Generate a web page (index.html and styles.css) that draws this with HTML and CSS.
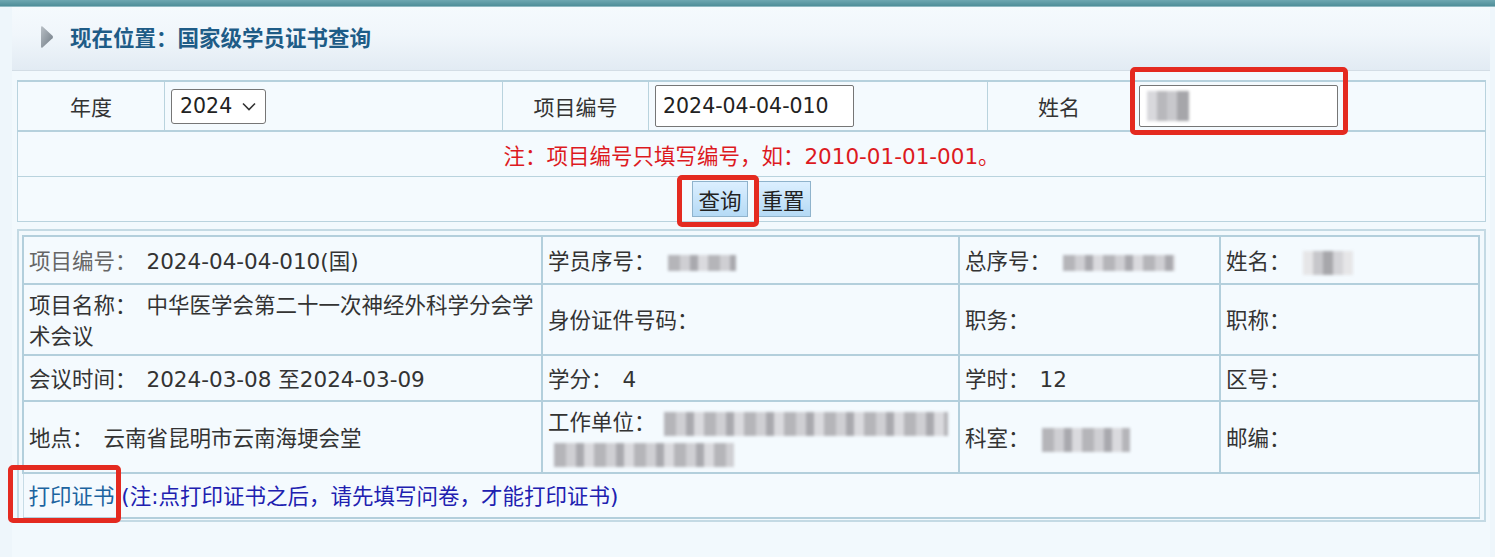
FILE: index.html
```html
<!DOCTYPE html>
<html>
<head>
    <meta charset="utf-8">
    <link rel="stylesheet" href="styles.css">
</head>
<body>
    <div class="topbar"></div>

    <div class="page">
        <!-- 当前位置 -->
        <div class="location">
            <svg class="loc-arrow" width="14" height="24" viewBox="0 0 14 24">
                <defs>
                    <linearGradient id="arr" x1="0" y1="0" x2="1" y2="1">
                        <stop offset="0" stop-color="#b9c0c6"/>
                        <stop offset="1" stop-color="#6f7a84"/>
                    </linearGradient>
                </defs>
                <path d="M2.5 1.5 Q1 0.8 1 2.5 L1 21.5 Q1 23.2 2.5 22.5 L12.5 13.2 Q13.6 12 12.5 10.8 Z" fill="url(#arr)"/>
            </svg>
            <h1 class="loc-title">现在位置：国家级学员证书查询</h1>
        </div>

        <div class="content">
            <!-- 查询条件 -->
            <table class="search">
                <colgroup>
                    <col style="width:147px">
                    <col style="width:338px">
                    <col style="width:146px">
                    <col style="width:339px">
                    <col style="width:143px">
                    <col>
                </colgroup>
                <tr class="row-fields">
                    <td class="label">年度</td>
                    <td>
                        <span class="select-box">
                            <select class="year-select">
                                <option>2024</option>
                            </select>
                            <svg class="select-chevron" width="14" height="9" viewBox="0 0 14 9">
                                <path d="M1 1.5 L7 7.5 L13 1.5" fill="none" stroke="#333" stroke-width="1.6"/>
                            </svg>
                        </span>
                    </td>
                    <td class="label">项目编号</td>
                    <td><input class="text-input code-input" type="text" value="2024-04-04-010"></td>
                    <td class="label">姓名</td>
                    <td>
                        <span class="name-input text-input">
                            <span class="blur blur-input"></span>
                        </span>
                    </td>
                </tr>
                <tr class="row-note">
                    <td colspan="6">注：项目编号只填写编号，如：2010-01-01-001。</td>
                </tr>
                <tr class="row-btns">
                    <td colspan="6">
                        <button class="btn">查询</button><button class="btn">重置</button>
                    </td>
                </tr>
            </table>

            <!-- 查询结果 -->
            <div class="result-wrap">
                <table class="result">
                    <colgroup>
                        <col style="width:519px">
                        <col style="width:417px">
                        <col style="width:261px">
                        <col>
                    </colgroup>
                    <tr class="r1">
                        <td><span class="k light">项目编号：</span><span class="v">2024-04-04-010(国)</span></td>
                        <td><span class="k">学员序号：</span><span class="blur" style="width:68px"></span></td>
                        <td><span class="k">总序号：</span><span class="blur" style="width:112px"></span></td>
                        <td><span class="k">姓名：</span><span class="blur blur-tall" style="width:50px"></span></td>
                    </tr>
                    <tr class="r2">
                        <td><span class="k">项目名称：</span><span class="v">中华医学会第二十一次神经外科学分会学术会议</span></td>
                        <td><span class="k">身份证件号码：</span></td>
                        <td><span class="k">职务：</span></td>
                        <td><span class="k">职称：</span></td>
                    </tr>
                    <tr class="r3">
                        <td><span class="k">会议时间：</span><span class="v">2024-03-08 至2024-03-09</span></td>
                        <td><span class="k">学分：</span><span class="v">4</span></td>
                        <td><span class="k">学时：</span><span class="v">12</span></td>
                        <td><span class="k">区号：</span></td>
                    </tr>
                    <tr class="r4">
                        <td><span class="k">地点：</span><span class="v">云南省昆明市云南海埂会堂</span></td>
                        <td class="work">
                            <div class="work-line1"><span class="k">工作单位：</span><span class="blur blur-big" style="width:284px"></span></div>
                            <div class="work-line2"><span class="blur blur-big" style="width:180px"></span></div>
                        </td>
                        <td><span class="k">科室：</span><span class="blur blur-big" style="width:88px"></span></td>
                        <td><span class="k">邮编：</span></td>
                    </tr>
                    <tr class="r5">
                        <td colspan="4"><a class="print-link" href="#">打印证书</a> <span class="print-note">(注:点打印证书之后，请先填写问卷，才能打印证书)</span></td>
                    </tr>
                </table>
            </div>
        </div>
    </div>

    <!-- 截图上的红色标注框 -->
    <div class="mark mark-name"></div>
    <div class="mark mark-query"></div>
    <div class="mark mark-print"></div>
</body>
</html>
```

FILE: styles.css
```css
/* 页面基础 */
body {
    margin: 0;
    background: #eef6fb;
    font-family: "DejaVu Sans", "Noto Sans CJK SC", sans-serif;
    font-size: 21.5px;
    color: #333;
    height: 557px;
    overflow: hidden;
}

.topbar {
    height: 6px;
    background: linear-gradient(#6ea7b1, #4f8e99);
    border-bottom: 1px solid #8fb9c2;
}

.page {
    margin: 0 5px 0 12px;
    background: #f2f9fd;
    height: 550px;
}

/* 当前位置 */
.location {
    height: 63px;
    display: flex;
    align-items: center;
    padding-left: 28px;
    background: linear-gradient(#f5fafd 0%, #f0f6fb 45%, #e2ebf3 100%);
    border-bottom: 1px solid #d3dde5;
}

.loc-arrow {
    margin-top: -3px;
}

.loc-title {
    margin: -4px 0 0 16px;
    font-family: "Noto Sans CJK SC", sans-serif;
    font-size: 21.5px;
    font-weight: bold;
    color: #1e5c87;
}

.content {
    padding: 9px 4px 0 5px;
}

/* 查询表格 */
.search {
    width: 1469px;
    table-layout: fixed;
    border-collapse: collapse;
    background: #f4fafe;
}

.search td {
    border: 1px solid #b9d3de;
    padding: 0 6px;
}

.row-fields td {
    height: 48px;
    border-top: 2px solid #b6d1dd;
    border-bottom: 2px solid #b6d1dd;
}

.row-fields td.label {
    text-align: center;
    font-family: "Noto Sans CJK SC", sans-serif;
    font-size: 21px;
}

.select-box {
    position: relative;
    display: inline-block;
    vertical-align: middle;
}

.year-select {
    appearance: none;
    -webkit-appearance: none;
    width: 95px;
    height: 35px;
    padding: 0 0 0 8px;
    border: 1px solid #767676;
    border-radius: 3px;
    background: #fff;
    font-family: "DejaVu Sans", sans-serif;
    font-size: 20.5px;
    color: #222;
}

.select-chevron {
    position: absolute;
    right: 10px;
    top: 13px;
    pointer-events: none;
}

.text-input {
    box-sizing: border-box;
    width: 199px;
    height: 42px;
    border: 1px solid #767676;
    border-radius: 2px;
    background: #fff;
    padding: 0 7px;
    font-family: "DejaVu Sans", sans-serif;
    font-size: 20.5px;
    color: #222;
    vertical-align: middle;
}

.name-input {
    display: inline-flex;
    align-items: center;
    margin-left: 2px;
}

.row-note td {
    height: 44px;
    text-align: center;
    color: #dd1a1f;
    font-size: 21.5px;
}

.row-btns td {
    height: 44px;
    text-align: center;
}

.btn {
    height: 36px;
    padding: 0 5px;
    margin: 0 4px;
    border: 1px solid #8fb3cc;
    background: linear-gradient(#dcefff, #b5daf5);
    font-family: "Noto Sans CJK SC", sans-serif;
    font-size: 21.5px;
    color: #222;
    vertical-align: middle;
}

/* 查询结果 */
.result-wrap {
    margin-top: 7px;
    width: 1469px;
    box-sizing: border-box;
    border: 2px solid #c4dae4;
    padding: 4px 4px 1px 3px;
}

.result {
    width: 100%;
    table-layout: fixed;
    border-collapse: collapse;
    background: #f4fafe;
}

.result td {
    border: 2px solid #b3cfdc;
    padding: 0 5px;
    line-height: 31px;
    vertical-align: middle;
}

.r1 td { height: 46px; }
.r2 td { height: 69px; }
.r3 td { height: 44px; }
.r4 td { height: 70px; }
.r5 td {
    height: 43px;
    border-left: 1px solid #c7dce6;
    border-right: 1px solid #c7dce6;
}

.k {
    font-family: "Noto Sans CJK SC", sans-serif;
}

.k.light {
    color: #666;
}

.v {
    margin-left: 10px;
}

.work {
    line-height: 32px;
}

.work-line1 {
    white-space: nowrap;
}

.work-line1 .blur {
    margin-left: 8px;
}

.work-line2 {
    margin-left: -6px;
}

/* 打码区域 */
.blur {
    display: inline-block;
    height: 16px;
    margin-left: 12px;
    vertical-align: middle;
    background: repeating-linear-gradient(90deg, #b5b5b9 0 12px, #cfcfd3 12px 22px, #a9a9ae 22px 30px, #dadade 30px 40px);
    filter: blur(1.5px);
}

.blur-tall {
    height: 24px;
    background: repeating-linear-gradient(90deg, #e6e6e8 0 10px, #c7c7cb 10px 20px, #a7a7ab 20px 30px, #d4d4d8 30px 40px);
}

.blur-big {
    height: 24px;
}

.blur-input {
    width: 42px;
    height: 30px;
    margin-left: 0;
    background: repeating-linear-gradient(90deg, #d8d8dc 0 10px, #b8b8bc 10px 20px, #c8c8cc 20px 30px, #a6a6aa 30px 42px);
}

.print-link {
    color: #1c64a0;
    text-decoration: none;
    font-family: "Noto Sans CJK SC", sans-serif;
}

.print-note {
    color: #2020b0;
}

/* 红色标注框 */
.mark {
    position: absolute;
    border: 5px solid #e42a20;
    border-radius: 5px;
    box-sizing: border-box;
}

.mark-name {
    left: 1130px;
    top: 67px;
    width: 218px;
    height: 68px;
}

.mark-query {
    left: 677px;
    top: 175px;
    width: 82px;
    height: 52px;
}

.mark-print {
    left: 8px;
    top: 465px;
    width: 113px;
    height: 58px;
}
```
